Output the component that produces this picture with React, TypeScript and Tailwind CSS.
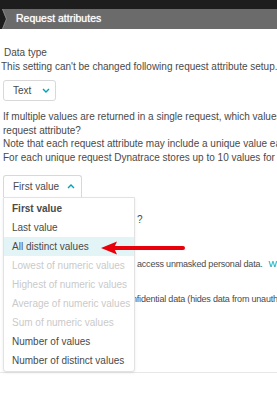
import React from "react";

const options = [
  { label: "First value", state: "selected" },
  { label: "Last value", state: "normal" },
  { label: "All distinct values", state: "hover" },
  { label: "Lowest of numeric values", state: "disabled" },
  { label: "Highest of numeric values", state: "disabled" },
  { label: "Average of numeric values", state: "disabled" },
  { label: "Sum of numeric values", state: "disabled" },
  { label: "Number of values", state: "normal" },
  { label: "Number of distinct values", state: "normal" },
];

const Chevron = ({ up = false }: { up?: boolean }) => (
  <svg width="8" height="5" viewBox="0 0 8 5" className="shrink-0">
    <path
      d={up ? "M1 4 L4 1 L7 4" : "M1 1 L4 4 L7 1"}
      fill="none"
      stroke="#00a1b2"
      strokeWidth="1.4"
    />
  </svg>
);

const App = () => {
  return (
    <div
      className="relative h-[400px] w-[277px] overflow-hidden bg-white text-[10px] leading-[13.5px] text-[#4a4a4a]"
      style={{ fontFamily: '"Liberation Sans", Arial, sans-serif' }}
    >
      <div className="h-[9px] bg-[#1d1d1d]" />
      <div className="relative flex h-[20px] items-center bg-[#6b6b6b] pl-[16px]">
        <svg width="7" height="20" viewBox="0 0 7 20" className="absolute left-0 top-0">
          <polygon points="0,0 2,0 6,10 2,20 0,20" fill="#1d1d1d" />
          <polyline points="2.5,0 6.5,10 2.5,20" fill="none" stroke="#8a8a8a" strokeWidth="0.8" />
        </svg>
        <span className="text-[10.5px] text-white [text-shadow:0_0_1px_rgba(255,255,255,0.9)]">
          Request attributes
        </span>
      </div>

      <div className="border-b border-[#e8e8e8] pb-[10px] pl-[3px]">
        <div className="mt-[17px] whitespace-nowrap pl-[1px]">Data type</div>
        <div className="-ml-[2px] whitespace-nowrap">
          This setting can't be changed following request attribute setup.
        </div>

        <div className="mt-[7px] flex h-[21px] w-[53px] items-center justify-between rounded-[3px] border border-[#d8d8d8] pl-[9px] pr-[5px]">
          <span>Text</span>
          <Chevron />
        </div>

        <div className="mt-[9px] whitespace-nowrap">
          If multiple values are returned in a single request, which values should be stored for this
        </div>
        <div className="whitespace-nowrap">request attribute?</div>
        <div className="whitespace-nowrap">
          Note that each request attribute may include a unique value each time it is captured.
        </div>
        <div className="whitespace-nowrap">
          For each unique request Dynatrace stores up to 10 values for this request attribute.
        </div>

        <div className="relative mt-[11px] w-[79px]">
          <div className="flex h-[22px] items-center justify-between rounded-t-[3px] border border-b-0 border-[#d8d8d8] pl-[9px] pr-[6px]">
            <span>First value</span>
            <Chevron up />
          </div>

          <div className="absolute left-0 top-full z-10 w-[132px] rounded-b-[3px] border border-[#e2e2e2] bg-white py-[1px] shadow-[0_1px_3px_rgba(0,0,0,0.08)]">
            {options.map((o) => (
              <div
                key={o.label}
                className={
                  "flex h-[19px] items-center whitespace-nowrap pl-[8px] " +
                  (o.state === "selected"
                    ? "font-bold text-[#4a4a4a]"
                    : o.state === "hover"
                    ? "bg-[#e3f4f7] text-[#4a4a4a]"
                    : o.state === "disabled"
                    ? "text-[#cacaca]"
                    : "text-[#4a4a4a]")
                }
              >
                {o.label}
              </div>
            ))}
          </div>
        </div>

        <div className="mt-[16px] flex whitespace-nowrap">
          <span className="inline-block w-[132px] shrink-0 overflow-hidden">Capture all values</span>
          <span className="ml-[2px] shrink-0">?</span>
        </div>
        <div className="mt-[31.5px] flex whitespace-nowrap text-[9px] tracking-[-0.2px]">
          <span className="inline-block w-[132px] shrink-0 overflow-hidden">Only permitted users can</span>
          <span className="ml-[2px] shrink-0">access unmasked personal data.</span>
          <span className="ml-[6px] shrink-0 text-[#00a1b2]">What's this?</span>
        </div>
        <div className="mt-[21.5px] flex whitespace-nowrap text-[9px] tracking-[-0.2px]">
          <span className="inline-block w-[129px] shrink-0 overflow-hidden">Request attribute contains co</span>
          <span className="shrink-0">nfidential data (hides data from unauthorized users)</span>
        </div>
        <div className="h-[55px]" />
      </div>

      <svg
        width="90"
        height="16"
        viewBox="0 0 90 16"
        className="absolute left-[99px] top-[240px] z-20"
      >
        <line x1="14" y1="8" x2="84" y2="8" stroke="#e8000b" strokeWidth="4" strokeLinecap="round" />
        <polygon points="2,8 18,1.5 15,8 18,14.5" fill="#e8000b" />
      </svg>
    </div>
  );
};

export default App;
